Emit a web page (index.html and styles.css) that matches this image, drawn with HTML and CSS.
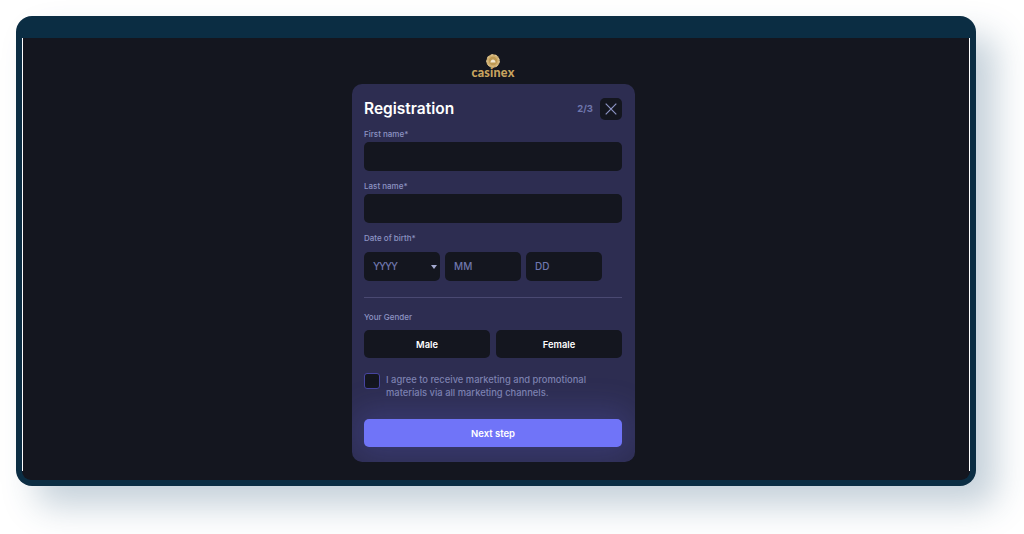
FILE: index.html
```html
<!DOCTYPE html>
<html lang="en">
<head>
<meta charset="utf-8">
<title>Casinex Registration</title>
<link rel="stylesheet" href="styles.css">
</head>
<body>
<div class="window">
  <div class="topbar"></div>
  <div class="screen">
    <div class="logo">
      <svg class="chip" width="14" height="14" viewBox="0 0 14 14" aria-hidden="true">
        <circle cx="7" cy="7" r="6.7" fill="#cfae6f"/>
        <circle cx="7" cy="7" r="6.2" fill="none" stroke="#e6d2a6" stroke-width="1" stroke-dasharray="2 2.4"/>
        <circle cx="7" cy="7" r="4.2" fill="#bd9852"/>
        <path d="M4.4 8.6C4.6 6.2 5.8 5.4 7 5.4S9.4 6.2 9.6 8.6Z" fill="#f3e7cd"/>
      </svg>
      <span class="logo-text">casinex</span>
    </div>
    <form class="card">
      <div class="card-head">
        <h1 class="title">Registration</h1>
        <div class="head-right">
          <span class="step">2/3</span>
          <button type="button" class="close" aria-label="Close">
            <svg width="12" height="12" viewBox="0 0 12 12" aria-hidden="true"><path d="M.7.7l10.6 10.6M11.3.7L.7 11.3" stroke="#8d94c4" stroke-width="1.2" fill="none"/></svg>
          </button>
        </div>
      </div>
      <div class="label first">First name*</div>
      <div class="input"></div>
      <div class="label">Last name*</div>
      <div class="input"></div>
      <div class="label">Date of birth*</div>
      <div class="date-row">
        <div class="input date"><span class="year">YYYY</span><span class="caret"></span></div>
        <div class="input date">MM</div>
        <div class="input date">DD</div>
      </div>
      <div class="divider"></div>
      <div class="label gender-label">Your Gender</div>
      <div class="gender-row">
        <div class="gender">Male</div>
        <div class="gender">Female</div>
      </div>
      <div class="agree">
        <span class="checkbox"></span>
        <span class="agree-text">I agree to receive marketing and promotional materials via all marketing channels.</span>
      </div>
      <button type="button" class="next">Next step</button>
    </form>
  </div>
</div>
</body>
</html>
```
FILE: styles.css
```css
* { box-sizing: border-box; }
html, body { margin: 0; height: 100%; background: #fff; overflow: hidden; }
body { padding: 16px 48px 48px 16px; font-family: "Inter", "Open Sans", sans-serif; }
.window {
  width: 960px;
  height: 470px;
  background: #0b2d43;
  border-radius: 16px;
  box-shadow: 20px 20px 34px rgba(40, 85, 120, 0.27);
  padding: 0 6px 6px;
  display: flex;
  flex-direction: column;
}
.topbar { height: 22px; flex: none; }
.screen {
  flex: 1;
  background: #14161f;
  border-radius: 0 0 9px 9px;
  display: flex;
  flex-direction: column;
  align-items: center;
  padding: 16px 7px 0 1px;
  position: relative;
}
.screen::before, .screen::after {
  content: "";
  position: absolute;
  top: 0;
  bottom: 9px;
  width: 1px;
  background: #fff;
}
.screen::before { left: 0; }
.screen::after { right: 0; }
.logo { display: flex; flex-direction: column; align-items: center; height: 30px; }
.chip { display: block; }
.logo-text {
  font-family: "Lato", sans-serif;
  font-weight: 900;
  font-size: 12.5px;
  line-height: 9px;
  letter-spacing: 0.2px;
  color: #c8a45f;
}
.card {
  width: 283px;
  height: 378px;
  margin-left: 1px;
  background: #2d2d51;
  border-radius: 10px;
  padding: 13px 13px 0 12px;
  overflow: hidden;
  display: flex;
  flex-direction: column;
}
.card-head { display: flex; justify-content: space-between; align-items: center; height: 23px; }
.title { margin: 0; font-size: 15.5px; line-height: 23px; font-weight: 600; color: #fff; }
.head-right { display: flex; align-items: center; gap: 7px; }
.step { font-size: 9.5px; font-weight: 700; color: #6f76ad; margin-top: -1px; }
.close {
  width: 22px; height: 22px; padding: 0; border: 0; border-radius: 5px;
  background: #14161f; display: flex; align-items: center; justify-content: center;
}
.label { font-size: 8px; line-height: 12px; height: 10px; margin-top: 9px; color: #8d94c4; font-weight: 500; white-space: nowrap; }
.label.first { margin-top: 8px; }
.input { height: 29px; background: #14161f; border-radius: 5px; }
.label + .input { margin-top: 4px; }
.date-row { display: flex; gap: 5.5px; margin-top: 10px; }
.input.date {
  width: 75.5px; padding: 0 0 1px 9px; display: flex; align-items: center;
  font-size: 10px; font-weight: 500; color: #6f76ad; position: relative;
}
.year { letter-spacing: -1px; }
.caret {
  position: absolute; right: 3px; top: 13px; width: 0; height: 0;
  border-left: 3.5px solid transparent; border-right: 3.5px solid transparent; border-top: 4px solid #a5aad0;
}
.divider { height: 1px; background: #4a4972; margin-top: 16px; }
.label.gender-label { margin-top: 13px; }
.gender-row { display: flex; gap: 6px; margin-top: 9px; }
.gender {
  flex: 1; height: 28px; background: #14161f; border-radius: 5px; color: #fff;
  font-size: 9.3px; font-weight: 600; display: flex; align-items: center; justify-content: center;
}
.agree { display: flex; gap: 6px; margin-top: 15px; }
.checkbox { flex: none; width: 16px; height: 16px; border: 1px solid #4745a0; border-radius: 3px; background: #14161f; }
.agree-text { width: 225px; font-size: 9.4px; line-height: 13px; color: #7d82b0; font-weight: 500; }
.next {
  height: 28px; margin-top: 20px; border: 0; border-radius: 5px; background: #7074f8; color: #fff;
  font-family: inherit; font-size: 9.5px; font-weight: 600; box-shadow: 0 0 32px 10px rgba(112, 116, 248, 0.18);
}
```
